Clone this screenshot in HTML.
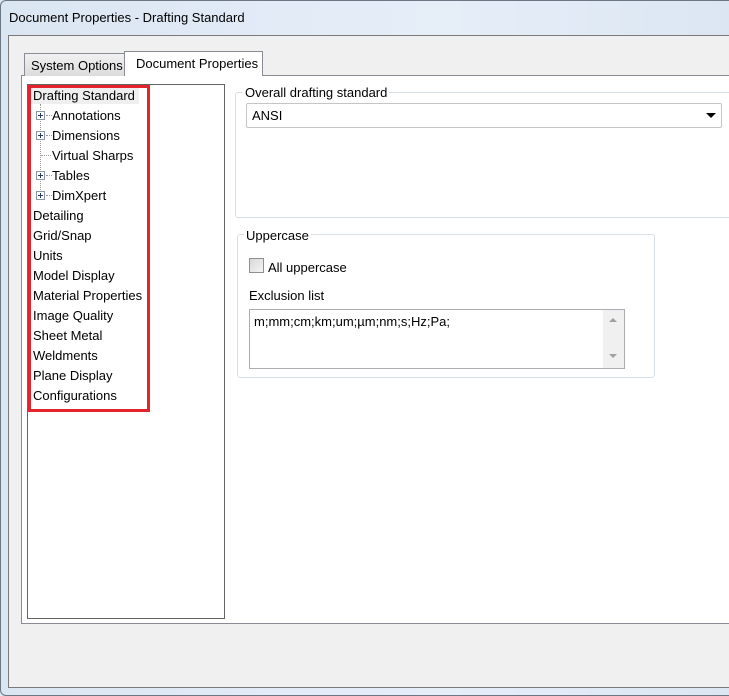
<!DOCTYPE html>
<html><head><style>
*{margin:0;padding:0;box-sizing:border-box}
body{width:729px;height:696px;overflow:hidden;background:#dde8f3;font-family:"Liberation Sans",sans-serif;font-size:12px;color:#000;position:relative}
.a{position:absolute}
.frame{left:0;top:0;width:740px;height:696px;border:1px solid #6b7785;border-radius:6px;background:linear-gradient(90deg,#dbe6f3,#e6eef8 60%,#dbe6f2)}
.title{left:9px;top:10px;font-size:13px}
.client{left:8px;top:35px;width:730px;height:653px;background:#f0f0f0;border:1px solid #7a7a7a}
.panel{left:21px;top:75px;width:720px;height:549px;background:#fff;border:1px solid #898c95}
.tab1{left:24px;top:53px;width:101px;height:23px;border:1px solid #898c95;border-bottom:none;background:linear-gradient(#f2f2f2,#dcdcdc);font-size:13px;padding:4px 0 0 6px;white-space:nowrap;overflow:hidden}
.tab2{left:124px;top:51px;width:139px;height:25px;border:1px solid #898c95;border-bottom:none;background:#fff;font-size:13px;padding:4px 0 0 11px;white-space:nowrap}
.tree{left:27px;top:84px;width:198px;height:535px;border:1px solid #646464;background:#fff}
.red{left:28px;top:85px;width:122px;height:327px;border:3px solid #e3232e}
.it{position:absolute;font-size:13px;line-height:16px;white-space:nowrap}
.pl{position:absolute;width:9px;height:9px;border:1px solid #8a97a8;background:#fff}
.pl:before{content:"";position:absolute;left:1px;top:3px;width:5px;height:1px;background:#2b3a67}
.pl:after{content:"";position:absolute;left:3px;top:1px;width:1px;height:5px;background:#2b3a67}
.dot{position:absolute;border-left:1px dotted #999}
.doth{position:absolute;border-top:1px dotted #999;width:6px}
.gb{border:1px solid #d5dfe5;border-radius:3px}
.leg{position:absolute;background:#fff;padding:0 2px;font-size:13px}
</style></head><body>
<div class="a frame"></div>
<div class="a title">Document Properties - Drafting Standard</div>
<div class="a client"></div>
<div class="a panel"></div>
<div class="a tab1">System Options</div>
<div class="a tab2">Document Properties</div>
<div class="a tree"></div>
<div class="a" style="left:31px;top:87px;width:108px;height:17px;background:#efefef"></div>
<div class="it" style="left:33px;top:88px">Drafting Standard</div>
<div class="dot" style="left:40px;top:104px;height:92px"></div>
<div class="pl" style="left:36px;top:111px"></div><div class="doth" style="left:46px;top:115px"></div>
<div class="it" style="left:52px;top:108px">Annotations</div>
<div class="pl" style="left:36px;top:131px"></div><div class="doth" style="left:46px;top:135px"></div>
<div class="it" style="left:52px;top:128px">Dimensions</div>
<div class="doth" style="left:41px;top:155px;width:10px"></div>
<div class="it" style="left:52px;top:148px">Virtual Sharps</div>
<div class="pl" style="left:36px;top:171px"></div><div class="doth" style="left:46px;top:175px"></div>
<div class="it" style="left:52px;top:168px">Tables</div>
<div class="pl" style="left:36px;top:191px"></div><div class="doth" style="left:46px;top:195px"></div>
<div class="it" style="left:52px;top:188px">DimXpert</div>
<div class="it" style="left:33px;top:208px">Detailing</div>
<div class="it" style="left:33px;top:228px">Grid/Snap</div>
<div class="it" style="left:33px;top:248px">Units</div>
<div class="it" style="left:33px;top:268px">Model Display</div>
<div class="it" style="left:33px;top:288px">Material Properties</div>
<div class="it" style="left:33px;top:308px">Image Quality</div>
<div class="it" style="left:33px;top:328px">Sheet Metal</div>
<div class="it" style="left:33px;top:348px">Weldments</div>
<div class="it" style="left:33px;top:368px">Plane Display</div>
<div class="it" style="left:33px;top:388px">Configurations</div>
<div class="a red"></div>

<div class="a gb" style="left:235px;top:92px;width:510px;height:126px"></div>
<div class="leg" style="left:243px;top:85px">Overall drafting standard</div>
<div class="a" style="left:246px;top:103px;width:476px;height:25px;border:1px solid #c5c5c5;border-radius:2px;background:#fff"></div>
<div class="it" style="left:252px;top:108px">ANSI</div>
<div class="a" style="left:706px;top:113px;width:0;height:0;border-left:5px solid transparent;border-right:5px solid transparent;border-top:5px solid #000"></div>

<div class="a gb" style="left:237px;top:234px;width:418px;height:144px"></div>
<div class="leg" style="left:244px;top:228px">Uppercase</div>
<div class="a" style="left:249px;top:258px;width:15px;height:15px;border:1px solid #8e8f8f;background:linear-gradient(135deg,#d8d8d8,#f4f4f4)"></div>
<div class="it" style="left:268px;top:260px">All uppercase</div>
<div class="it" style="left:249px;top:288px">Exclusion list</div>
<div class="a" style="left:249px;top:309px;width:376px;height:60px;border:1px solid #abadb3;background:#fff"></div>
<div class="a" style="left:603px;top:310px;width:21px;height:58px;background:#f0f0f0"></div>
<div class="a" style="left:609px;top:318px;border-left:4px solid transparent;border-right:4px solid transparent;border-bottom:4px solid #a0a0a0"></div>
<div class="a" style="left:609px;top:354px;border-left:4px solid transparent;border-right:4px solid transparent;border-top:4px solid #a0a0a0"></div>
<div class="it" style="left:254px;top:314px">m;mm;cm;km;um;µm;nm;s;Hz;Pa;</div>
</body></html>
